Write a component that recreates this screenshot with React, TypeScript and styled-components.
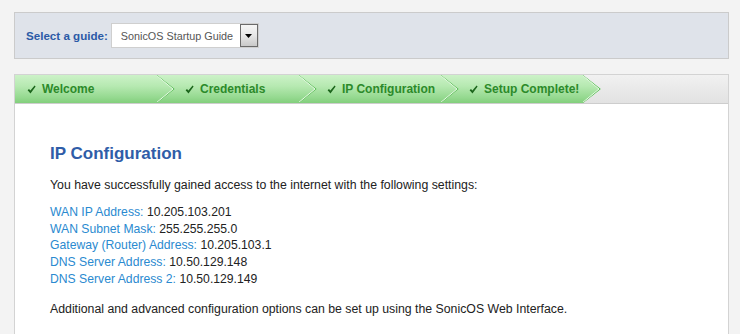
import React from "react";
import styled, { createGlobalStyle } from "styled-components";

const GlobalStyle = createGlobalStyle`
  html, body { margin: 0; padding: 0; background: #f3f3f3; }
  body { font-family: "Liberation Sans", Arial, sans-serif; }
`;

const Page = styled.div`
  padding: 12px 11px 0 14px;
  display: flex;
  flex-direction: column;
  gap: 15px;
`;

const GuideBar = styled.div`
  display: flex;
  align-items: center;
  gap: 3px;
  padding: 10px 11px;
  background: #dfe3ea;
  border: 1px solid #cbcbcb;
`;

const GuideLabel = styled.span`
  font-size: 11.6px;
  font-weight: bold;
  color: #2c5aa6;
`;

const SelectBox = styled.div`
  display: flex;
  align-items: stretch;
  box-sizing: border-box;
  width: 148px;
  height: 25px;
  background: #fff;
  border: 1px solid #cfcfcf;
`;

const SelectText = styled.span`
  flex: 1;
  display: flex;
  align-items: center;
  padding-left: 9px;
  font-size: 10.8px;
  color: #555;
`;

const DropButton = styled.span`
  display: flex;
  align-items: center;
  justify-content: center;
  box-sizing: border-box;
  width: 18px;
  border: 1px solid #6a6a6a;
  background: linear-gradient(to bottom, #f6f6f6 0%, #e6e6e6 50%, #c9c9c9 100%);
`;

const MainPanel = styled.div`
  display: flex;
  flex-direction: column;
  background: #fff;
  border: 1px solid #d3d3d3;
`;

const TabBar = styled.div`
  display: flex;
  height: 28px;
  background: linear-gradient(to bottom, #f1f1f1, #e2e2e2);
  border-bottom: 1px solid #cdcdcd;
`;

const Tab = styled.div<{ $first: boolean; $z: number }>`
  position: relative;
  z-index: ${(p) => p.$z};
  display: flex;
  align-items: center;
  box-sizing: border-box;
  flex: 0 0 160px;
  height: 28px;
  margin-left: ${(p) => (p.$first ? "0" : "-18px")};
  padding-left: ${(p) => (p.$first ? "12px" : "28px")};
  clip-path: polygon(0 0, calc(100% - 18px) 0, 100% 50%, calc(100% - 18px) 100%, 0 100%);
  background: linear-gradient(to bottom, #ccf2c8 0%, #b6e9b1 40%, #95d990 80%, #82cf7c 100%);
  font-size: 12px;
  font-weight: bold;
  color: #2c8a2a;
  white-space: nowrap;
`;

const Check = styled.svg`
  width: 9px;
  height: 9px;
  margin-right: 6px;
  flex: 0 0 auto;
`;

const Chevron = styled.svg`
  position: absolute;
  top: 0;
  right: 0;
  width: 18px;
  height: 28px;
`;

const Content = styled.div`
  padding: 40px 35px 60px;
`;

const Heading = styled.h2`
  margin: 0;
  font-size: 17px;
  line-height: 20px;
  font-weight: bold;
  color: #2f5da8;
`;

const Para = styled.p<{ $gap: number }>`
  margin: ${(p) => p.$gap}px 0 0;
  font-size: 12.3px;
  line-height: 16.8px;
  color: #222;
`;

const SettingList = styled.div`
  margin-top: 10px;
  display: flex;
  flex-direction: column;
`;

const SettingRow = styled.div`
  font-size: 12.2px;
  line-height: 16.8px;
  color: #222;
`;

const SettingLabel = styled.span`
  color: #2a8ad0;
`;

const tabs = ["Welcome", "Credentials", "IP Configuration", "Setup Complete!"];

const settings: [string, string][] = [
  ["WAN IP Address:", "10.205.103.201"],
  ["WAN Subnet Mask:", "255.255.255.0"],
  ["Gateway (Router) Address:", "10.205.103.1"],
  ["DNS Server Address:", "10.50.129.148"],
  ["DNS Server Address 2:", "10.50.129.149"],
];

export default function App() {
  return (
    <>
      <GlobalStyle />
      <Page>
        <GuideBar>
          <GuideLabel>Select a guide:</GuideLabel>
          <SelectBox>
            <SelectText>SonicOS Startup Guide</SelectText>
            <DropButton>
              <svg width="7" height="4" viewBox="0 0 7 4">
                <path d="M0 0H7L3.5 4Z" fill="#000" />
              </svg>
            </DropButton>
          </SelectBox>
        </GuideBar>
        <MainPanel>
          <TabBar>
            {tabs.map((t, i) => (
              <Tab key={t} $first={i === 0} $z={10 - i}>
                <Check viewBox="0 0 9 9">
                  <path d="M0.6 5.2 L2 3.9 L3.4 5.6 L7.6 0.6 L8.6 1.5 L3.5 8.4 Z" fill="#1c661c" />
                </Check>
                {t}
                <Chevron viewBox="0 0 18 28">
                  <polyline points="0,0 17,14 0,28" fill="none" stroke="#5fbd5b" strokeWidth="1.2" />
                  <polyline points="-1,0 16,14 -1,28" fill="none" stroke="#e8f9e6" strokeWidth="1" />
                </Chevron>
              </Tab>
            ))}
          </TabBar>
          <Content>
            <Heading>IP Configuration</Heading>
            <Para $gap={13}>
              You have successfully gained access to the internet with the following settings:
            </Para>
            <SettingList>
              {settings.map(([k, v]) => (
                <SettingRow key={k}>
                  <SettingLabel>{k}</SettingLabel> {v}
                </SettingRow>
              ))}
            </SettingList>
            <Para $gap={13}>
              Additional and advanced configuration options can be set up using the SonicOS Web Interface.
            </Para>
          </Content>
        </MainPanel>
      </Page>
    </>
  );
}
